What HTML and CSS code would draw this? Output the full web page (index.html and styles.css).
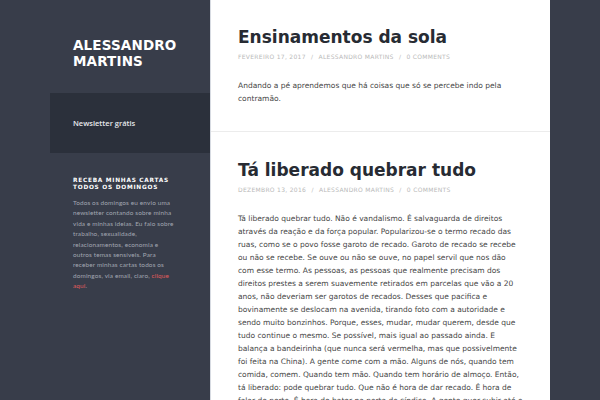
FILE: index.html
```html
<!DOCTYPE html>
<html lang="pt">
<head>
<meta charset="utf-8">
<title>Alessandro Martins</title>
<link rel="stylesheet" href="styles.css">
</head>
<body>
<div class="page">
  <aside class="sidebar">
    <h1 class="site-title">ALESSANDRO<br>MARTINS</h1>
    <div class="menu-box">
      <span class="menu-item">Newsletter grátis</span>
    </div>
    <div class="widget">
      <h3 class="widget-title">RECEBA MINHAS CARTAS TODOS OS DOMINGOS</h3>
      <p class="widget-text">Todos os domingos eu envio uma newsletter contando sobre minha vida e minhas ideias. Eu falo sobre trabalho, sexualidade, relacionamentos, economia e outros temas sensíveis. Para receber minhas cartas todos os domingos, via email, claro, <a class="widget-link" href="#">clique aqui</a>.</p>
    </div>
  </aside>
  <main class="content">
    <article class="post">
      <h2 class="post-title">Ensinamentos da sola</h2>
      <div class="post-meta">Fevereiro 17, 2017 <span class="sep">/</span> Alessandro Martins <span class="sep">/</span> 0 Comments</div>
      <p class="post-text">Andando a pé aprendemos que há coisas que só se percebe indo pela contramão.</p>
    </article>
    <article class="post">
      <h2 class="post-title">Tá liberado quebrar tudo</h2>
      <div class="post-meta">Dezembro 13, 2016 <span class="sep">/</span> Alessandro Martins <span class="sep">/</span> 0 Comments</div>
      <p class="post-text">Tá liberado quebrar tudo. Não é vandalismo. É salvaguarda de direitos através da reação e da força popular. Popularizou-se o termo recado das ruas, como se o povo fosse garoto de recado. Garoto de recado se recebe ou não se recebe. Se ouve ou não se ouve, no papel servil que nos dão com esse termo. As pessoas, as pessoas que realmente precisam dos direitos prestes a serem suavemente retirados em parcelas que vão a 20 anos, não deveriam ser garotos de recados. Desses que pacifica e bovinamente se deslocam na avenida, tirando foto com a autoridade e sendo muito bonzinhos. Porque, esses, mudar, mudar querem, desde que tudo continue o mesmo. Se possível, mais igual ao passado ainda. E balança a bandeirinha (que nunca será vermelha, mas que possivelmente foi feita na China). A gente come com a mão. Alguns de nós, quando tem comida, comem. Quando tem mão. Quando tem horário de almoço. Então, tá liberado: pode quebrar tudo. Que não é hora de dar recado. É hora de falar de perto. É hora de bater na porta do síndico. A gente quer subir até o apartamento e conversar sobre os direitos.</p>
    </article>
  </main>
</div>
</body>
</html>
```

FILE: styles.css
```css
html, body {
  margin: 0;
  padding: 0;
}
body {
  background: #383d4a;
  font-family: "DejaVu Sans", Verdana, sans-serif;
}
.page {
  display: flex;
  align-items: flex-start;
  padding-left: 50px;
  height: 400px;
  overflow: hidden;
}
.sidebar {
  width: 160px;
  flex: none;
}
.site-title {
  margin: 0;
  padding: 37px 0 24px 23px;
  color: #ffffff;
  font-size: 13.5px;
  line-height: 16px;
  font-weight: bold;
  letter-spacing: 0.15px;
}
.menu-box {
  background: #2b303b;
  height: 60px;
  display: flex;
  align-items: center;
  padding-left: 23px;
}
.menu-item {
  color: #e6e8ec;
  font-family: "Open Sans", sans-serif;
  font-size: 7.5px;
  font-weight: 600;
}
.widget {
  padding: 24px 34px 0 23px;
}
.widget-title {
  margin: 0 0 7px;
  color: #ffffff;
  font-size: 5.8px;
  line-height: 7px;
  font-weight: bold;
  letter-spacing: 0.75px;
}
.widget-text {
  margin: 0;
  color: #a2a7b2;
  font-family: Lato, "Open Sans", sans-serif;
  font-size: 6.4px;
  line-height: 10.4px;
  letter-spacing: 0.15px;
}
.widget-link {
  color: #e05c5c;
  text-decoration: none;
}
.content {
  width: 339px;
  flex: none;
  background: #ffffff;
  border-left: 1px solid #d7dbe2;
  min-height: 400px;
}
.post {
  padding: 26px 27px 26px 27px;
  border-bottom: 1px solid #ececec;
}
.post + .post {
  padding-top: 27px;
}
.post-title {
  margin: 0;
  color: #272b33;
  font-size: 17px;
  line-height: 22px;
  font-weight: bold;
}
.post-meta {
  margin-top: 4px;
  color: #b9b9b9;
  font-size: 6px;
  line-height: 10px;
  text-transform: uppercase;
  letter-spacing: 0.3px;
}
.sep {
  margin: 0 3px;
}
.post-text {
  margin: 17px 0 0;
  color: #464646;
  font-size: 7.5px;
  line-height: 13px;
}
```
